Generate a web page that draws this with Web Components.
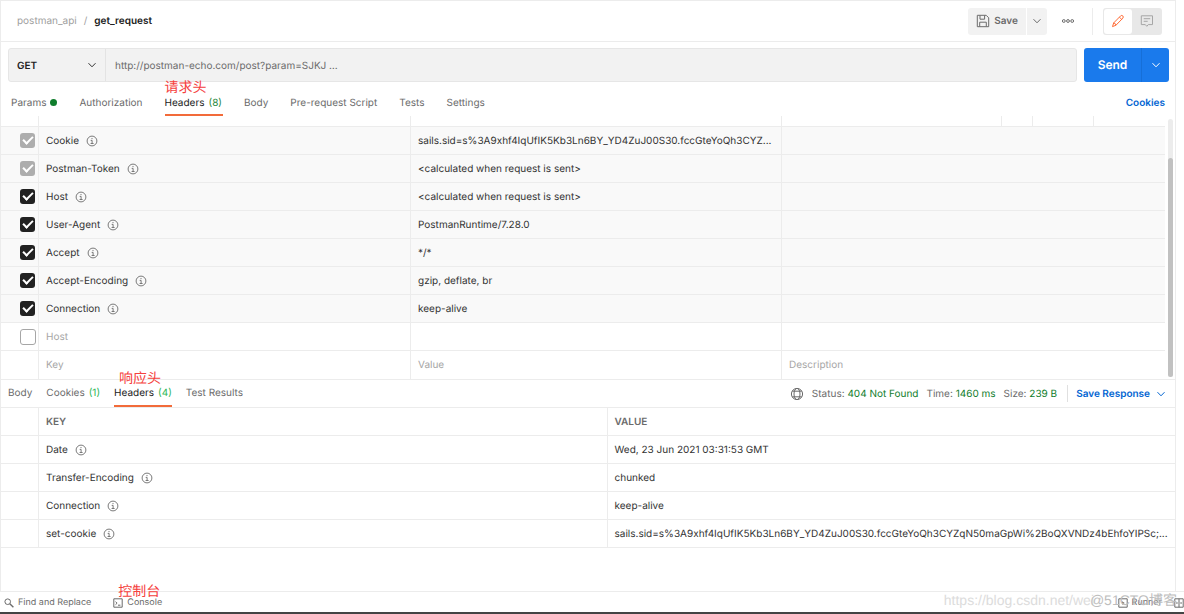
<!DOCTYPE html>
<html lang="en">
<head>
<meta charset="utf-8">
<title>get_request</title>
<style>
html, body { margin: 0; height: 100%; }
body { font: 10px/16px Inter, "Noto Sans CJK SC", sans-serif; text-rendering: geometricPrecision; color: #333; background: #fff; overflow: hidden; }
</style>
</head>
<body>
<api-workbench></api-workbench>

<script>
const reset = `
  *, *::before, *::after { box-sizing: border-box; }
  button, input, select { font: inherit; color: inherit; text-rendering: inherit; margin: 0; border: 0; padding: 0; background: none; }
  a { color: inherit; text-decoration: none; }
  svg { display: block; fill: none; stroke: currentColor; }
`;
const define = (name, html, setup) => {
  const template = document.createElement('template');
  template.innerHTML = html.replace('<style>', '<style>' + reset);
  customElements.define(name, class extends HTMLElement {
    connectedCallback() {
      if (this.shadowRoot) return;
      this.attachShadow({ mode: 'open' }).append(template.content.cloneNode(true));
      if (setup) setup(this, this.shadowRoot);
    }
  });
};

const icons = {
  chevron: [10, 10, '<path d="M1.5 3.2 5 6.8l3.5-3.6"/>'],
  info: [12, 12, '<circle cx="6" cy="6" r="4.9" stroke-width=".9"/><path d="M4.7 5.4H6.1v3M4.6 8.5h3" stroke-width=".9"/><path d="M5.5 3.6h1" />'],
  save: [14, 14, '<path d="M1.3 1.3h8.9l2.5 2.5v8.9H1.3zM4 1.5v3.7h4.6V1.5M3.7 12.5V8.2h6.6v4.3"/>'],
  more: [14, 6, '<circle cx="2.8" cy="3" r="1.4"/><circle cx="7" cy="3" r="1.4"/><circle cx="11.2" cy="3" r="1.4"/>'],
  pencil: [14, 14, '<path d="M1.5 12.6 2.7 8.9 9.6 1.9q1.2-1 2.2 0t0 2.3L5 11.2zM8.5 3.2l2.2 2.2M2.7 8.9q1.9.3 2.3 2.3"/>'],
  comment: [14, 14, '<path d="M1.3 1.8h11.2v8.8H8.3L6.8 12.3 5.3 10.6h-4zM3.7 4.7h6.5M3.7 7.3h4"/>'],
  globe: [14, 14, '<circle cx="7" cy="7" r="5.6"/><ellipse cx="7" cy="7" rx="3" ry="5.6"/><path d="M2.3 4.2h9.4M2.3 9.8h9.4"/>'],
  search: [10, 10, '<circle cx="3.7" cy="3.7" r="2.8"/><path d="m5.8 5.8 3.6 3.4" stroke-width="1.4"/>'],
  console: [10, 10, '<path d="M.8.8h8.4v8.4H.8z"/><path d="m2.5 3.7 1.6 1.5-1.6 1.5M5 7.2h2.4"/>'],
  runner: [10, 10, '<path d="M.8.8h8.4v8.4H.8z"/><path d="M4 3.2v3.6L6.7 5z" fill="currentColor" stroke="none"/>'],
  panes: [10, 10, '<path d="M.8.8h8.4v8.4H.8zM5 .8v8.4M2 5h1.8M6.2 5H8"/>']
};
define('ui-icon', `<style>:host { display: inline-flex; flex: none; }</style>`, (el, root) => {
  const [w, h, body] = icons[el.getAttribute('name')];
  root.innerHTML += `<svg width="${w}" height="${h}" viewBox="0 0 ${w} ${h}" aria-hidden="true">${body}</svg>`;
});

define('check-mark', `<style>
  :host { display: block; height: 16px; }
  input { appearance: none; display: grid; place-items: center; width: 16px; height: 16px; border: 1px solid #a6a6a6; border-radius: 3px; background: #fff; }
  input:checked { width: 15px; height: 15px; border: 0; background: #212121; }
  input:checked:disabled { background: #adadad; }
  input:checked::after { content: ""; width: 10px; height: 6px; border: solid #fff; border-width: 0 0 2px 2px; transform: translateY(-1px) rotate(-45deg); }
</style><input type="checkbox">`, (el, root) => {
  const box = root.querySelector('input');
  box.checked = el.hasAttribute('checked');
  box.disabled = el.hasAttribute('disabled');
  box.setAttribute('aria-label', el.getAttribute('label'));
});

define('red-note', `<style>
  :host { position: absolute; font: 14px/16px "Noto Sans CJK SC", sans-serif; color: #f5413d; white-space: nowrap; pointer-events: none; }
</style><slot></slot>`);

define('tab-item', `<style>
  :host { position: relative; display: flex; color: #6b6b6b; white-space: nowrap; }
  a { display: flex; align-items: center; gap: 4px; border-bottom: 2px solid transparent; padding: var(--tab-pad, 2px 2px 0 0); }
  :host([active]) a { color: #212121; border-color: #f26b3a; }
  .count { color: var(--count, #1f883d); }
  .dot { width: 7px; height: 7px; border-radius: 50%; background: #0f7d2c; }
</style><a href="#"><slot></slot></a><slot name="note"></slot>`, (el, root) => {
  const link = root.querySelector('a');
  if (el.hasAttribute('count')) link.insertAdjacentHTML('beforeend', `<span class="count">(${el.getAttribute('count')})</span>`);
  if (el.hasAttribute('dot')) link.insertAdjacentHTML('beforeend', '<span class="dot"></span>');
});

define('request-title', `<style>
  :host { display: flex; align-items: center; height: 42px; padding: 0 13px 0 16px; border-top: 1px solid #ececec; border-bottom: 1px solid #ececec; }
  nav { flex: 1; display: flex; gap: 7px; color: #a0a0a0; }
  b { font-weight: 600; color: #212121; }
  button { display: flex; align-items: center; justify-content: center; gap: 4px; height: 27px; background: #f2f2f2; color: #6b6b6b; font-weight: 600; }
  .save { width: 58px; border-radius: 3px 0 0 3px; }
  .caret { width: 20px; margin-left: 1px; border-radius: 0 3px 3px 0; }
  .more { width: 14px; margin: 0 17px 0 14px; background: none; }
  .modes { display: flex; margin-left: 10px; padding: 1px; border-radius: 3px; background: #e8e8e8; }
  .modes button { width: 29px; height: 25px; background: none; color: #a6a6a6; }
  .modes .on { width: 28px; background: #fff; border-radius: 3px; color: #ff6c37; }
  .rule { width: 1px; height: 27px; background: #ececec; }
</style>
<nav aria-label="Breadcrumb"><a href="#">postman_api</a><span>/</span><b>get_request</b></nav>
<button class="save"><ui-icon name="save"></ui-icon>Save</button>
<button class="caret" aria-label="Save options"><ui-icon name="chevron"></ui-icon></button>
<button class="more" aria-label="More actions"><ui-icon name="more"></ui-icon></button>
<span class="rule"></span>
<div class="modes">
  <button class="on" aria-label="Edit"><ui-icon name="pencil"></ui-icon></button>
  <button aria-label="Comments"><ui-icon name="comment"></ui-icon></button>
</div>`);

define('url-bar', `<style>
  :host { display: flex; gap: 7px; padding: 6px 6px 0 7px; }
  .field { flex: 1; display: flex; height: 34px; border: 1px solid #e6e6e6; border-radius: 3px; background: #f2f2f2; }
  .method { position: relative; display: flex; width: 97px; border-right: 1px solid #e3e3e3; }
  select { appearance: none; flex: 1; padding: 1px 0 0 8px; font-weight: 600; color: #212121; }
  .method ui-icon { position: absolute; right: 8px; top: 11px; pointer-events: none; }
  input { flex: 1; padding: 1px 0 0 9px; color: #6b6b6b; }
  .send { display: flex; height: 34px; border-radius: 3px; overflow: hidden; background: #1a7aec; color: #fff; }
  .send button { width: 57px; font-size: 12px; font-weight: 600; }
  .send button + button { display: grid; place-items: center; width: 28px; border-left: 1px solid #166fd8; }
</style>
<div class="field">
  <div class="method"><select aria-label="Method"><option>GET</option><option>POST</option></select><ui-icon name="chevron"></ui-icon></div>
  <input aria-label="Request URL" value="http://postman-echo.com/post?param=SJKJ …">
</div>
<div class="send"><button>Send</button><button aria-label="Send options"><ui-icon name="chevron"></ui-icon></button></div>`);

const grid = `
  table { width: 100%; border-collapse: separate; border-spacing: 0; table-layout: fixed; }
  th, td { height: 28px; padding: 1px 3px 0 7px; border-bottom: 1px solid #ececec; border-left: 1px solid #ececec; text-align: left; font-weight: 400; white-space: nowrap; }
  th:first-child, td:first-child { border-left: 0; }
  .name { display: flex; align-items: center; gap: 7px; }
  .name ui-icon { color: #6b6b6b; }
`;
const name = (key, info = true) => `<td><span class="name">${key}${info ? '<ui-icon name="info"></ui-icon>' : ''}</span></td>`;
const session = 'sails.sid=s%3A9xhf4IqUfIK5Kb3Ln6BY_YD4ZuJ00S30.fccGteYoQh3CYZ';

define('request-headers', `<style>${grid}
  :host { display: flex; padding-right: 2px; border-bottom: 1px solid #ececec; }
  .view { flex: 1; min-width: 0; }
  .tail { display: grid; grid-template-columns: 372px 371px 1fr 31px 61px 72px; height: 11px; padding-left: 37px; border-bottom: 1px solid #ececec; }
  .tail span { border-left: 1px solid #ececec; }
  col:nth-child(1) { width: 37px; } col:nth-child(2) { width: 372px; } col:nth-child(3) { width: 371px; }
  tr { background: #f9f9f9; }
  tr.blank { background: #fff; color: #a6a6a6; }
  td:first-child { padding: 0 0 0 19px; }
  tr:last-child td { border-bottom: 0; padding-bottom: 1px; }
  .bar { width: 5px; margin: 3px 0 2px 3px; border-radius: 3px; background: #ececec; display: flex; align-items: end; }
  .bar span { width: 5px; height: 85%; border-radius: 3px; background: #c1c1c1; }
</style>
<div class="view">
  <div class="tail"><span></span><span></span><span></span><span></span><span></span><span></span></div>
  <table><colgroup><col><col><col><col></colgroup><tbody></tbody></table>
</div>
<div class="bar"><span></span></div>`, (el, root) => {
  const rows = [
    ['Cookie', session + '...', 'disabled'], ['Postman-Token', '&lt;calculated when request is sent&gt;', 'disabled'],
    ['Host', '&lt;calculated when request is sent&gt;'], ['User-Agent', 'PostmanRuntime/7.28.0'],
    ['Accept', '*/*'], ['Accept-Encoding', 'gzip, deflate, br'], ['Connection', 'keep-alive']
  ];
  root.querySelector('tbody').innerHTML = rows.map(([key, value, state = '']) =>
    `<tr><td><check-mark checked ${state} label="${key}"></check-mark></td>${name(key)}<td>${value}</td><td></td></tr>`).join('') +
    `<tr class="blank"><td><check-mark label="Host"></check-mark></td>${name('Host', false)}<td></td><td></td></tr>
     <tr class="blank"><td></td><td>Key</td><td>Value</td><td>Description</td></tr>`;
});

define('response-headers', `<style>${grid}
  :host { display: block; }
  col:first-child { width: 37px; }
  th { font-weight: 600; color: #6b6b6b; }
</style>
<table><colgroup><col><col><col></colgroup><thead><tr><th></th><th>KEY</th><th>VALUE</th></tr></thead><tbody></tbody></table>`, (el, root) => {
  const rows = [['Date', 'Wed, 23 Jun 2021 03:31:53 GMT'], ['Transfer-Encoding', 'chunked'], ['Connection', 'keep-alive'], ['set-cookie', session + 'qN50maGpWi%2BoQXVNDz4bEhfoYIPSc;...']];
  root.querySelector('tbody').innerHTML = rows.map(([key, value]) => `<tr><td></td>${name(key)}<td>${value}</td></tr>`).join('');
});

define('response-meta', `<style>
  :host { display: flex; align-items: center; gap: 8px; color: #6b6b6b; white-space: nowrap; }
  b { font-weight: 400; color: #0f7d2c; }
  button { display: flex; align-items: center; gap: 6px; height: 17px; margin-left: 2px; padding-left: 8px; border-left: 1px solid #e0e0e0; color: #0265d2; font-weight: 600; }
</style>
<ui-icon name="globe"></ui-icon>
<span>Status: <b>404 Not Found</b></span><span>Time: <b>1460 ms</b></span><span>Size: <b>239 B</b></span>
<button>Save Response <ui-icon name="chevron"></ui-icon></button>`);

define('status-bar', `<style>
  :host { position: relative; display: flex; align-items: center; gap: 22px; height: 23px; padding: 1px 0 0 4px; border-top: 1px solid #ececec; border-bottom: 2px solid #444; font-size: 9px; color: #6b6b6b; }
  button { position: relative; display: flex; align-items: center; gap: 4px; white-space: nowrap; }
  .run { margin-left: auto; }
  .panes { margin-left: -10px; }
  .mark { position: absolute; right: 90px; bottom: 3px; font: 14px/18px "Liberation Sans", sans-serif; color: #dcdcdc; }
  .mark + .mark { right: 7px; font: 14px/18px "Liberation Sans", "Noto Sans CJK SC", sans-serif; color: #bdbdbd; }
</style>
<button><ui-icon name="search"></ui-icon>Find and Replace</button>
<button><ui-icon name="console"></ui-icon>Console<slot name="note"></slot></button>
<button class="run"><ui-icon name="runner"></ui-icon>Runner</button>
<button class="panes" aria-label="Two-pane view"><ui-icon name="panes"></ui-icon></button>
<span class="mark">https://blog.csdn.net/wei</span><span class="mark">@51CTO博客</span>`);

define('api-workbench', `<style>
  :host { display: flex; flex-direction: column; min-height: 100vh; }
  main { flex: 1; margin-right: 8px; border: solid #ececec; border-width: 0 1px; }
  .tabs { display: flex; gap: 21px; height: 34px; padding: 0 10px; --tab-pad: 2px 1px 0 0; }
  .tabs > a { margin-left: auto; align-self: center; padding-top: 7px; font-weight: 600; color: #0265d2; }
  .tabs tab-item { padding-top: 7px; }
  .tabs.response { gap: 14px; height: 28px; padding: 0 9px 0 7px; border-bottom: 1px solid #ececec; --count: #2bb656; --tab-pad: 1px 0 0 0; }
  .response tab-item { padding-top: 0; }
  .response response-meta { margin-left: auto; }
  .above { left: 0; top: -3px; }
  .response .above { left: 5px; top: -10px; }
  .console { left: 5px; top: -12px; }
</style>
<main>
  <request-title></request-title>
  <url-bar></url-bar>
  <nav class="tabs" aria-label="Request">
    <tab-item dot>Params</tab-item><tab-item>Authorization</tab-item>
    <tab-item active count="8">Headers<red-note slot="note" class="above">请求头</red-note></tab-item>
    <tab-item>Body</tab-item><tab-item>Pre-request Script</tab-item><tab-item>Tests</tab-item><tab-item>Settings</tab-item>
    <a href="#">Cookies</a>
  </nav>
  <request-headers></request-headers>
  <nav class="tabs response" aria-label="Response">
    <tab-item>Body</tab-item><tab-item count="1">Cookies</tab-item>
    <tab-item active count="4">Headers<red-note slot="note" class="above">响应头</red-note></tab-item>
    <tab-item>Test Results</tab-item>
    <response-meta></response-meta>
  </nav>
  <response-headers></response-headers>
</main>
<status-bar><red-note slot="note" class="console">控制台</red-note></status-bar>`);
</script>
</body>
</html>
